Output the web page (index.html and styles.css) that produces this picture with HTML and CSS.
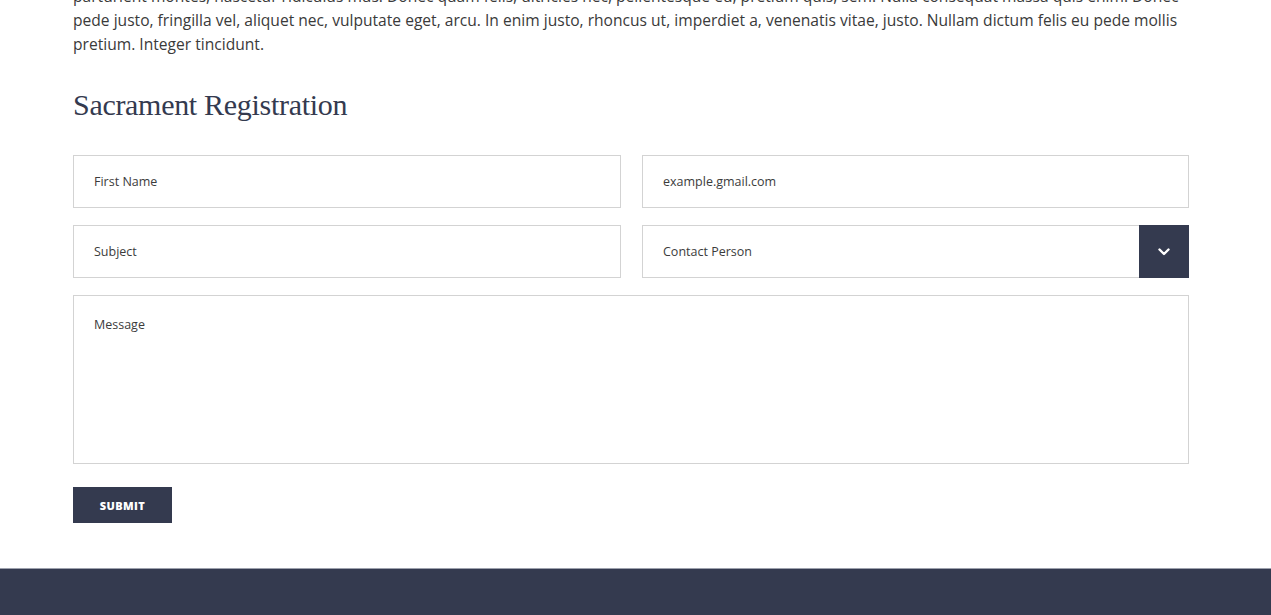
FILE: index.html
```html
<!DOCTYPE html>
<html lang="en">
<head>
    <meta charset="UTF-8">
    <meta name="viewport" content="width=device-width, initial-scale=1.0">
    <title>Sacrament Registration</title>
    <link rel="stylesheet" href="styles.css">
</head>
<body>
    <main class="container">
        <p class="intro">
            Lorem ipsum dolor sit amet, consectetuer adipiscing elit. Aenean commodo ligula eget dolor. Aenean massa. Cum sociis natoque penatibus et magnis dis<br>
            parturient montes, nascetur ridiculus mus. Donec quam felis, ultricies nec, pellentesque eu, pretium quis, sem. Nulla consequat massa quis enim. Donec<br>
            pede justo, fringilla vel, aliquet nec, vulputate eget, arcu. In enim justo, rhoncus ut, imperdiet a, venenatis vitae, justo. Nullam dictum felis eu pede mollis<br>
            pretium. Integer tincidunt.
        </p>

        <h2 class="section-title">Sacrament Registration</h2>

        <form class="reg-form">
            <input class="field" type="text" placeholder="First Name">
            <input class="field" type="email" placeholder="example.gmail.com">
            <input class="field" type="text" placeholder="Subject">
            <div class="select-wrap">
                <select class="field select">
                    <option>Contact Person</option>
                </select>
                <span class="select-btn">
                    <svg width="12" height="8" viewBox="0 0 12 8"><path d="M1.5 1.5 L6 6 L10.5 1.5" fill="none" stroke="#fff" stroke-width="2.4" stroke-linecap="round" stroke-linejoin="round"/></svg>
                </span>
            </div>
            <textarea class="field message" placeholder="Message"></textarea>
            <div class="actions">
                <button type="button" class="btn-submit">Submit</button>
            </div>
        </form>
    </main>

    <footer class="footer">
        <div class="footer-cols">
            <h4 class="footer-title">Holy Family</h4>
            <h4 class="footer-title">Mass Times</h4>
            <h4 class="footer-title">Contact</h4>
        </div>
    </footer>
</body>
</html>
```

FILE: styles.css
```css
:root {
    --navy: #343a4f;
    --text: #3a3a3a;
    --border: #d3d3d3;
    --placeholder: #3c3c3c;
    --gold: #a7835f;
}

* {
    margin: 0;
    padding: 0;
    box-sizing: border-box;
}

body {
    font-family: 'Open Sans', 'Lato', sans-serif;
    color: var(--text);
    background: #fff;
    overflow: hidden;
}

.container {
    width: 1116px;
    margin-left: 73px;
    padding-bottom: 45px;
}

.intro {
    margin-top: -40px;
    font-size: 15.6px;
    line-height: 24px;
    white-space: nowrap;
}

.section-title {
    font-family: 'Liberation Serif', serif;
    font-weight: 400;
    font-size: 30px;
    color: var(--navy);
    margin-top: 32px;
    margin-bottom: 33px;
    letter-spacing: -0.3px;
}

.reg-form {
    display: grid;
    grid-template-columns: 548px 547px;
    column-gap: 21px;
    row-gap: 17px;
}

.field {
    width: 100%;
    height: 53px;
    border: 1px solid var(--border);
    background: #fff;
    padding: 0 20px;
    font-family: 'Open Sans', sans-serif;
    font-size: 12.5px;
    color: var(--placeholder);
    outline: none;
    border-radius: 0;
}

.field::placeholder {
    color: var(--placeholder);
    opacity: 1;
}

.select-wrap {
    display: flex;
}

.select {
    appearance: none;
    -webkit-appearance: none;
    flex: 1;
    border-right: none;
}

.select-btn {
    width: 50px;
    height: 53px;
    background: var(--navy);
    display: flex;
    align-items: center;
    justify-content: center;
}

.message {
    grid-column: 1 / 3;
    height: 169px;
    padding-top: 20px;
    resize: none;
}

.actions {
    grid-column: 1 / 3;
    padding-top: 6px;
}

.btn-submit {
    width: 99px;
    height: 36px;
    border: none;
    background: var(--navy);
    color: #fff;
    font-family: 'Open Sans', sans-serif;
    font-weight: 800;
    font-size: 11px;
    letter-spacing: 0.4px;
    text-transform: uppercase;
    cursor: pointer;
}

.footer {
    background: var(--navy);
    border-top: 1px solid #9da1ad;
    height: 100px;
    padding-top: 44px;
}

.footer-cols {
    display: flex;
    padding-left: 45px;
    gap: 300px;
}

.footer-title {
    font-family: 'Liberation Serif', serif;
    font-weight: 400;
    font-size: 26px;
    color: var(--gold);
}
```
